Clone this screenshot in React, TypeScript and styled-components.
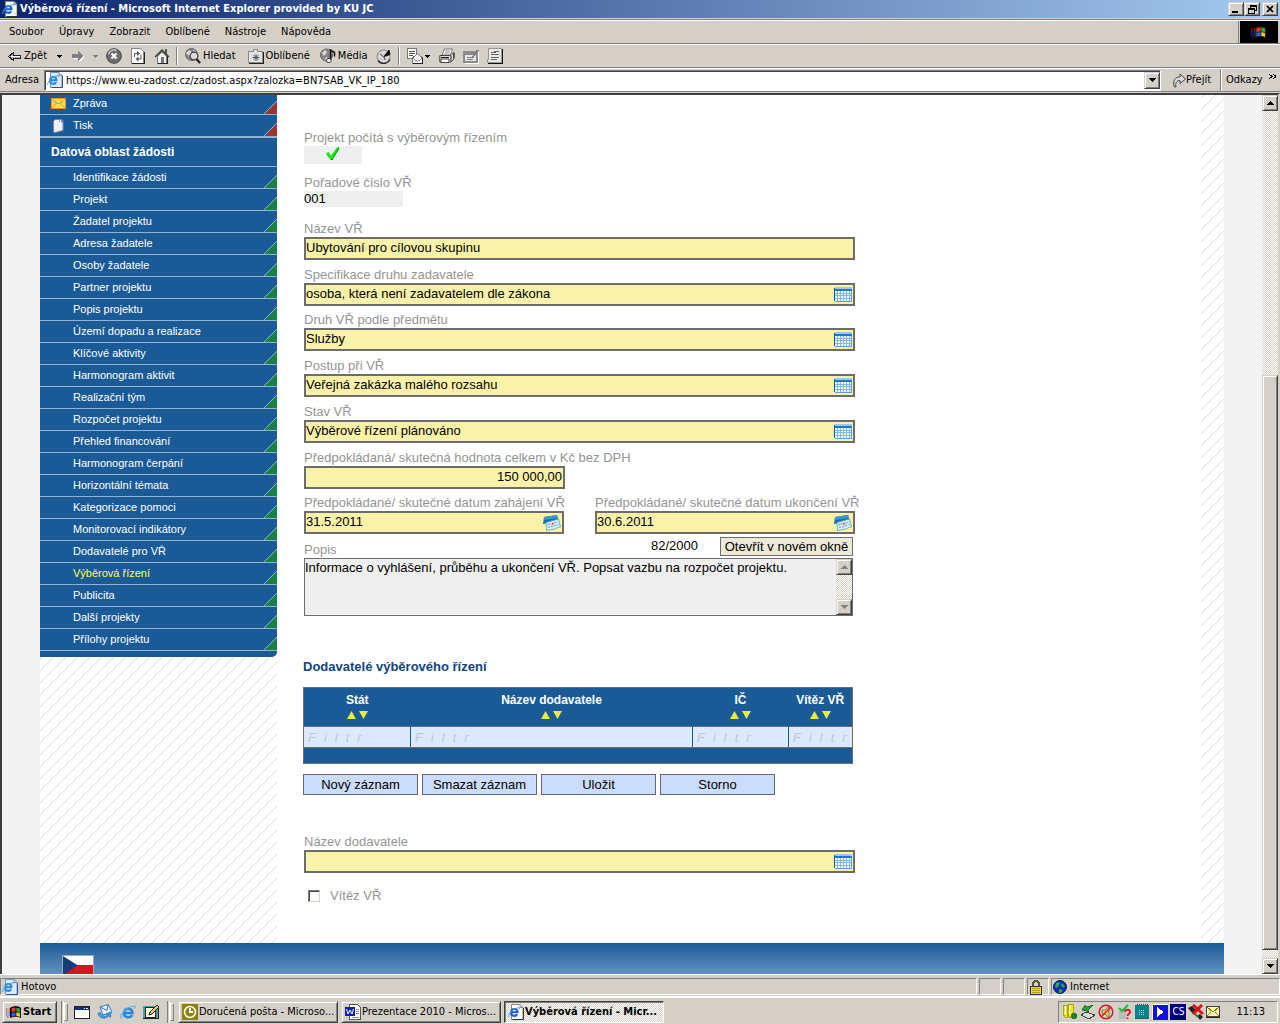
import React from "react";
import styled, { createGlobalStyle, css } from "styled-components";

const face = "#d4d0c8";
const shade = "#808080";
const deep = "#404040";
const navy = "#1a5b97";
const chromeFont = `Tahoma, "DejaVu Sans Condensed", "DejaVu Sans", sans-serif`;
const pageFont = `"Liberation Sans", Arial, sans-serif`;

const raised = css`
  border: 1px solid;
  border-color: ${face} ${deep} ${deep} ${face};
  box-shadow: inset 1px 1px 0 #fff, inset -1px -1px 0 ${shade};
`;
const dither = css`
  background: repeating-conic-gradient(#fff 0 25%, ${face} 0 50%) 0 0 / 2px 2px;
`;

const GlobalStyle = createGlobalStyle`
  * { box-sizing: border-box; }
  body { margin: 0; background: ${face}; }
  button, input, textarea { font: inherit; color: inherit; margin: 0; padding: 0; border-radius: 0; }
  svg { display: block; flex: none; }
`;

/* ---------- window chrome ---------- */

const Desktop = styled.div`
  height: 100vh;
  display: flex;
  flex-direction: column;
  overflow: hidden;
  background: ${face};
  color: #000;
  font: 11px/14px ${chromeFont};
  white-space: nowrap;
`;

const TitleBar = styled.header`
  height: 18px;
  flex: none;
  display: flex;
  align-items: center;
  gap: 2px;
  padding: 0 2px;
  color: #fff;
  font-weight: bold;
  background: linear-gradient(to right, #0a246a, #a6caf0);
`;

const Title = styled.h1`
  flex: 1;
  margin: 0;
  font-size: 11px;
`;

const Caption = styled.button`
  width: 16px;
  height: 14px;
  display: flex;
  align-items: center;
  justify-content: center;
  color: #000;
  background: ${face};
  ${raised}
`;
const CaptionPair = styled.div`
  display: flex;
`;

const Bar = styled.div<{ $height: number }>`
  height: ${(p) => p.$height}px;
  flex: none;
  display: flex;
  align-items: center;
  border-top: 1px solid #fff;
  border-bottom: 1px solid ${shade};
`;

const MenuBar = styled(Bar)`
  margin-top: 2px;
  align-items: stretch;
  box-shadow: 0 -1px 0 ${shade};
`;
const Menu = styled.nav`
  flex: 1;
  display: flex;
  align-items: center;
  padding-left: 2px;
  border-right: 1px solid ${shade};
`;
const MenuItem = styled.button`
  padding: 0 8px 0 7px;
  border: 0;
  background: none;
`;
const Throbber = styled.div`
  width: 40px;
  margin-left: 1px;
  display: flex;
  align-items: center;
  justify-content: center;
  background: #000;
  border-right: 2px solid ${face};
`;

const Tools = styled(Bar)`
  padding-left: 8px;
`;
const Tool = styled.button<{ $after?: number }>`
  display: flex;
  align-items: center;
  gap: 2px;
  height: 20px;
  border: 0;
  background: none;
  margin-right: ${(p) => p.$after ?? 8}px;
`;
const Divider = styled.span`
  width: 2px;
  height: 18px;
  margin-right: 7px;
  border-left: 1px solid ${shade};
  border-right: 1px solid #fff;
`;

const AddressBar = styled(Bar)`
  padding-left: 5px;
  margin-bottom: 1px;
`;
const AddressLabel = styled.label`
  width: 39px;
`;
const Combo = styled.div`
  flex: 1;
  height: 21px;
  display: flex;
  align-items: center;
  gap: 3px;
  padding-left: 2px;
  background: #fff;
  border: 1px solid;
  border-color: ${shade} #fff #fff ${shade};
  box-shadow: inset 1px 1px 0 ${deep};
`;
const Url = styled.input`
  flex: 1;
  height: 16px;
  padding-top: 1px;
  border: 0;
  outline: 0;
  background: none;
`;
const ComboButton = styled.button`
  width: 16px;
  height: 17px;
  display: flex;
  align-items: center;
  justify-content: center;
  background: ${face};
  ${raised}
`;
const Go = styled.button`
  display: flex;
  align-items: center;
  width: 60px;
  padding-left: 11px;
  height: 22px;
  border: 0;
  background: none;
  border-right: 1px solid ${shade};
`;
const Links = styled.button`
  width: 59px;
  height: 22px;
  display: flex;
  align-items: center;
  justify-content: space-between;
  border: 0;
  border-left: 1px solid #fff;
  padding: 0 4px;
  background: none;
  svg { margin-bottom: 6px; }
`;

/* ---------- scroll bars ---------- */

const ScrollRail = styled.div`
  width: 16px;
  flex: none;
  display: flex;
  flex-direction: column;
  ${dither}
`;
const ScrollButton = styled.button`
  width: 16px;
  height: 16px;
  flex: none;
  display: flex;
  align-items: center;
  justify-content: center;
  background: ${face};
  ${raised}
`;
const Track = styled.span<{ $share: number }>`
  flex: ${(p) => p.$share} 1 0;
`;
const Thumb = styled(Track)`
  background: ${face};
  ${raised}
`;

/* ---------- web page ---------- */

const Viewport = styled.div`
  flex: 1;
  min-height: 0;
  display: flex;
  border: solid;
  border-width: 2px 2px 0 2px;
  border-color: ${deep} ${face} #fff ${deep};
  background: #f3f3f3;
`;
const Page = styled.div`
  flex: 1;
  min-width: 0;
  overflow: hidden;
  display: flex;
  flex-direction: column;
  padding: 0 38px;
  font-family: ${pageFont};
`;
const Columns = styled.div`
  flex: 1;
  min-height: 0;
  display: flex;
  background:
    linear-gradient(to bottom right, transparent 46%, #d8d8d8 48%, #d8d8d8 52%, transparent 54%) 0 0 / 12px 12px,
    #fff;
`;
const Sidebar = styled.aside`
  width: 237px;
  flex: none;
`;
const Nav = styled.nav`
  margin-top: -2px;
  padding-bottom: 6px;
  background: ${navy};
  border-bottom-right-radius: 5px;
  overflow: hidden;
`;
const NavItem = styled.a<{ $corner: string; $active?: boolean }>`
  display: flex;
  height: 22px;
  padding-left: 11px;
  line-height: 20px;
  border-bottom: 1px solid #8fb2d6;
  color: ${(p) => (p.$active ? "#ffff4d" : "#fff")};
  text-decoration: none;
  background: linear-gradient(to bottom right, transparent 48%, #8fb2d6 48%, #8fb2d6 52%, ${(p) => p.$corner} 53%)
    right bottom / 13px 13px no-repeat;
`;
const NavIcon = styled.span`
  width: 22px;
  display: flex;
  align-items: center;
`;
const NavHeading = styled.h2`
  margin: 0;
  height: 30px;
  padding-left: 11px;
  font-size: 12px;
  line-height: 29px;
  color: #fff;
  border-top: 1px solid #8fb2d6;
  border-bottom: 1px solid #8fb2d6;
`;

const Main = styled.main`
  flex: 1;
  min-width: 0;
  margin-right: 23px;
  padding: 34px 0 0 26px;
  background: #fff;
  font-size: 13px;
  line-height: 17px;
`;
const Form = styled.form`
  width: 552px;
  padding-left: 1px;
`;
const Field = styled.div<{ $gap: number }>`
  padding-bottom: ${(p) => p.$gap}px;
`;
const Label = styled.label`
  display: block;
  color: #949494;
`;
const ReadOnly = styled.output<{ $width: number; $height: number }>`
  display: block;
  width: ${(p) => p.$width}px;
  height: ${(p) => p.$height}px;
  line-height: 16px;
  background: #efefef;
  svg { margin-left: 22px; }
`;
const Box = styled.div<{ $width?: number }>`
  width: ${(p) => (p.$width ? p.$width + "px" : "100%")};
  height: 23px;
  display: flex;
  background: #fbf2a9;
  border: 2px solid #6d6d6d;
`;
const BoxInput = styled.input<{ $right?: boolean }>`
  flex: 1;
  min-width: 0;
  height: 17px;
  border: 0;
  outline: 0;
  padding-right: 1px;
  background: none;
  text-align: ${(p) => (p.$right ? "right" : "left")};
`;
const BoxButton = styled.button`
  width: 19px;
  display: flex;
  align-items: center;
  border: 0;
  background: none;
`;
const Dates = styled.div`
  display: flex;
  gap: 31px;
  padding-bottom: 3px;
`;
const DateField = styled.div`
  width: 260px;
`;
const NoteHead = styled.div`
  width: 549px;
  display: flex;
  align-items: flex-start;
`;
const NoteLabel = styled(Label)`
  flex: 1;
  padding-top: 4px;
`;
const Counter = styled.span`
  margin-right: 22px;
`;
const OpenButton = styled.button`
  width: 133px;
  height: 19px;
  line-height: 17px;
  background: #ece9d8;
  border: 1px solid #6d6d6d;
`;
const Note = styled.div`
  width: 549px;
  height: 58px;
  display: flex;
  margin-bottom: 42px;
  border: 1px solid #6d6d6d;
  background: #efefef;
`;
const NoteText = styled.textarea`
  flex: 1;
  resize: none;
  overflow: hidden;
  border: 0;
  outline: 0;
  background: none;
`;
const Section = styled.h3`
  margin: 0 0 12px;
  font-size: 13px;
  line-height: 17px;
  color: #15447e;
`;
const Grid = styled.table`
  width: 549px;
  height: 77px;
  table-layout: fixed;
  border-collapse: collapse;
  border: 1px solid #6d6d6d;
  background: ${navy};
  color: #fff;
  margin-bottom: 10px;
  font-size: 12px;
  th, td { padding: 0; }
`;
const Head = styled.th`
  height: 39px;
  padding-bottom: 2px !important;
  line-height: 14px;
  border-bottom: 1px solid #6d6d6d;
`;
const Sorters = styled.div`
  display: flex;
  justify-content: center;
  gap: 3px;
  padding-top: 4px;
`;
const Sorter = styled.button`
  border: 0;
  background: none;
`;
const FilterCell = styled.td`
  height: 21px;
  background: #dce8fe;
  border-right: 1px solid ${navy};
  border-bottom: 1px solid #6d6d6d;
  &:last-child { border-right-color: #6d6d6d; }
`;
const Filter = styled.input`
  display: block;
  width: 100%;
  height: 18px;
  padding-left: 4px;
  border: 0;
  outline: 0;
  background: none;
  font-size: 13px;
  font-style: italic;
  letter-spacing: 8px;
  &::placeholder { color: #bcc7d8; opacity: 1; }
`;
const Actions = styled.div`
  display: flex;
  gap: 4px;
  margin-bottom: 38px;
`;
const Action = styled.button`
  width: 115px;
  height: 21px;
  line-height: 19px;
  background: #ccdcff;
  border: 1px solid #66667a;
`;
const CheckRow = styled.div`
  display: flex;
  align-items: center;
  gap: 10px;
  padding: 14px 0 0 4px;
`;
const Check = styled.input`
  appearance: none;
  width: 12px;
  height: 12px;
  background: #fff;
  border: 1px solid;
  border-color: ${shade} ${face} ${face} ${shade};
  box-shadow: inset 1px 1px 0 ${deep};
`;
const Footer = styled.footer`
  height: 31px;
  flex: none;
  padding: 12px 22px 0;
  background: linear-gradient(${navy}, #6592c0);
`;

/* ---------- status bar and task bar ---------- */

const StatusBar = styled.div`
  height: 23px;
  flex: none;
  display: flex;
  gap: 2px;
  padding: 3px 0 1px;
  border-top: 1px solid #fff;
  border-bottom: 1px solid #fff;
`;
const Pane = styled.div<{ $width?: number }>`
  flex: ${(p) => (p.$width ? `0 0 ${p.$width}px` : "1")};
  display: flex;
  align-items: center;
  gap: 3px;
  padding-left: 1px;
  border: 1px solid;
  border-color: ${shade} #fff #fff ${shade};
`;
const TaskBar = styled.footer`
  height: 27px;
  flex: none;
  display: flex;
  align-items: center;
  padding: 1px 2px 0;
  border-top: 1px solid #fff;
`;
const Start = styled.button`
  width: 55px;
  height: 22px;
  display: flex;
  align-items: center;
  gap: 1px;
  padding-left: 3px;
  margin-right: 4px;
  font-weight: bold;
  background: ${face};
  ${raised}
`;
const Grip = styled.span`
  width: 7px;
  height: 22px;
  display: flex;
  justify-content: space-between;
  &::before { content: ""; width: 2px; border-left: 1px solid ${shade}; border-right: 1px solid #fff; }
  &::after { content: ""; width: 3px; margin: 2px 0; border: 1px solid; border-color: #fff ${shade} ${shade} #fff; }
`;
const Quick = styled.div`
  display: flex;
  gap: 7px;
  padding: 0 8px 0 6px;
`;
const QuickButton = styled.button`
  border: 0;
  background: none;
`;
const Tasks = styled.div`
  flex: 1;
  min-width: 0;
  display: flex;
  gap: 3px;
  padding-left: 4px;
`;
const Task = styled.button<{ $active?: boolean }>`
  width: 160px;
  height: 22px;
  display: flex;
  align-items: center;
  gap: 1px;
  padding: 0 3px;
  text-align: left;
  background: ${face};
  ${raised}
  ${(p) =>
    p.$active &&
    css`
      ${dither}
      font-weight: bold;
      border-color: ${deep} #fff #fff ${deep};
      box-shadow: inset 1px 1px 0 ${shade};
    `}
`;
const Tray = styled.div`
  height: 22px;
  display: flex;
  align-items: center;
  gap: 2px;
  padding: 0 12px 0 3px;
  border: 1px solid;
  border-color: ${shade} #fff #fff ${shade};
`;
const Language = styled.span`
  width: 16px;
  height: 16px;
  font-size: 10px;
  line-height: 16px;
  text-align: center;
  color: #fff;
  background: #000080;
`;
const Clock = styled.time`
  margin-left: 14px;
`;

/* ---------- icons ---------- */

type IconProps = { children: React.ReactNode; w?: number; h?: number; smooth?: boolean };
const Icon = ({ children, w = 16, h = 16, smooth }: IconProps) => (
  <svg width={w} height={h} viewBox={`0 0 ${w} ${h}`} fill="none" shapeRendering={smooth ? "auto" : "crispEdges"} aria-hidden="true">
    {children}
  </svg>
);
const Down = ({ color = "#000" }) => (
  <Icon w={7} h={4}><path d="M0 0h7v1h-1v1h-1v1h-1v1h-1v-1h-1v-1h-1v-1h-1z" fill={color} /></Icon>
);
const Up = ({ color = "#000" }) => (
  <Icon w={7} h={4}><path d="M3 0h1v1h1v1h1v1h1v1h-7v-1h1v-1h1v-1h1z" fill={color} /></Icon>
);
const Caret = ({ color = "#000" }) => (
  <Icon w={5} h={3}><path d="M0 0h5v1h-1v1h-1v1h-1v-1h-1v-1h-1z" fill={color} /></Icon>
);
const PageE = ({ plain }: { plain?: boolean }) => (
  <Icon smooth>
    <path d="M3.500.5h8.500l3 3v12H3.500z" fill={plain ? "#dfeafc" : "#fff"} stroke={plain ? "#6c94d0" : "#888"} />
    <path d="M15.500 4v11.500h-11" stroke={plain ? "#33508c" : "#333"} />
    <path d="M12 .5v3h3" stroke="#888" />
    <path d="M3 8.300h6.500c0-4.400-6-4.400-6.400 0-.3 4.100 4.600 4.500 6 1.900" stroke={plain ? "#2488dc" : "#1c5cd8"} strokeWidth="2.100" />
    <path d="M.9 13c-1.400-2.500 4.600-9 10.100-9.300.8 0 .6 1 .2 1.600" stroke="#4ba4ee" />
  </Icon>
);
const BigE = () => (
  <Icon smooth>
    <path d="M4 9h8.500c0-5.600-8.500-5.600-8.600 0 0 5 6.500 5.500 8.200 2" stroke="#2688d8" strokeWidth="2.600" />
    <path d="M1.500 14.500c-3-3 5-12 13-12.500 1 0 .8 1.500 0 2.500" stroke="#5ab2f0" strokeWidth="1.200" />
  </Icon>
);
const Back = () => (
  <Icon w={14} h={14}>
    <path d="M5.500 3.500l-5 4 5 4v-2.500h7V6h-7z" fill="#b0b0b0" stroke="#222" />
    <path d="M3 7h9" stroke="#fff" />
  </Icon>
);
const Forward = () => (
  <Icon w={14} h={14}>
    <path d="M8 3l6 5-6 5v-3H2V7h6z" fill="#fff" />
    <path d="M7 2l6 5-6 5V9H1V5h6z" fill="#808080" />
  </Icon>
);
const Stop = () => (
  <Icon smooth>
    <circle cx="8" cy="8" r="7.300" fill="#6e6e6e" stroke="#3c3c3c" />
    <path d="M2.500 6.500a5.500 5.500 0 0 1 8-4" stroke="#c8c8c8" strokeWidth="1.500" />
    <path d="M5.500 5.500l5 5m0-5l-5 5" stroke="#fff" strokeWidth="2" />
  </Icon>
);
const Refresh = () => (
  <Icon w={14}>
    <path d="M.5.5h9l3 3v11.500H.5z" fill="#fff" stroke="#888" />
    <path d="M13.500 4v11.500H1" stroke="#222" />
    <path d="M3.500 9V5.500h3M10 6.500V11H7" stroke="#555" shapeRendering="auto" />
    <path d="M6 3l3 2.500L6 8zM7.500 8.500v5l-3-2.500z" fill="#555" shapeRendering="auto" />
  </Icon>
);
const Home = () => (
  <Icon>
    <path d="M11 1h2v5h-2z" fill="#555" />
    <path d="M3.500 8v7.500h9V8L8 3.500z" fill="#f2f2f2" stroke="#777" />
    <path d="M13.500 8v7.500H4" stroke="#222" />
    <path d="M1 9l7-7 7 7" stroke="#444" strokeWidth="1.500" shapeRendering="auto" />
    <path d="M7 9h3v6H7z" fill="#777" />
  </Icon>
);
const Search = () => (
  <Icon smooth>
    <circle cx="6.500" cy="6.500" r="6" fill="#888" stroke="#666" />
    <path d="M1.500 5l3-2.500 2 2-2 3zM8 2l3 2" fill="#ddd" stroke="#ddd" />
    <circle cx="9" cy="8" r="3.800" fill="#dcdcdc" stroke="#444" strokeWidth="1.300" />
    <path d="M11.500 11l3.500 4" stroke="#222" strokeWidth="2.400" />
  </Icon>
);
const Star = () => (
  <Icon>
    <path d="M.5 3.500h5v-2h4v2h5v11H.5z" fill="#e2e2e2" stroke="#8a8a8a" />
    <path d="M15.500 4v11.500H1" stroke="#222" />
    <path d="M8 6v7M4.500 9.500h7M5.500 7l5 5m0-5l-5 5" stroke="#555" shapeRendering="auto" />
  </Icon>
);
const Media = () => (
  <Icon smooth>
    <circle cx="6.500" cy="7" r="6" fill="#858585" stroke="#666" />
    <path d="M2 5l3-3 2 2-3 4zM4 11l3-2 1 3" fill="#ddd" />
    <path d="M10.500 12V2l4 2.500v4" stroke="#111" strokeWidth="1.500" />
    <ellipse cx="8.800" cy="12.500" rx="2.400" ry="2" fill="#fff" stroke="#333" />
  </Icon>
);
const History = () => (
  <Icon smooth>
    <circle cx="7.500" cy="8.500" r="6.500" fill="#d0d0d0" stroke="#888" />
    <path d="M2 12.500a7 7 0 0 0 12-1" stroke="#333" strokeWidth="1.600" />
    <path d="M8 8.500L13 2l1 4.500z" fill="#000" stroke="#111" />
    <path d="M8 9L4 6M8 9l1 3" stroke="#555" />
    <path d="M8 3v1.500M3 9h1.500M8 14v-1.500M12 9.500h1" stroke="#fff" />
  </Icon>
);
const MailPage = () => (
  <Icon>
    <path d="M.5.500h9v10h-9z" fill="#fff" stroke="#777" />
    <path d="M2 3h6M2 5h6M2 7h4" stroke="#555" />
    <path d="M5.500 10l5-4.500 5 4.500v5.500h-10z" fill="#f4f4f4" stroke="#777" />
    <path d="M6 10.500l4.500 3 4.500-3" stroke="#888" />
    <path d="M15.500 10v5.500h-10" stroke="#222" />
  </Icon>
);
const Printer = () => (
  <Icon smooth>
    <path d="M5.500 1h8l-2 6H3z" fill="#fff" stroke="#777" />
    <path d="M6 3h5M5.500 5h5" stroke="#888" />
    <path d="M.8 7.500h11l3-3v6.500l-3 3H.8z" fill="#ddd" stroke="#444" />
    <path d="M12 8v5.500M15 5v5M2 9.500h8" stroke="#222" />
    <path d="M2 11h8v3.500H2z" fill="#fff" stroke="#444" />
  </Icon>
);
const Edit = () => (
  <Icon>
    <path d="M1 4h15v12H2z" fill="#fff" />
    <path d="M0 3h15v12H0z" fill="#8a8a8a" />
    <path d="M2 7h11v6H2z" fill="#e6e6e6" />
    <path d="M4 9.500h4M4 11.500h6" stroke="#808080" />
    <path d="M9 10l6-8" stroke="#808080" strokeWidth="2" />
  </Icon>
);
const Discuss = () => (
  <Icon>
    <path d="M1.500.5h13v14H.5v-3h1z" fill="#e8e8e8" stroke="#999" />
    <path d="M15.500 1v14.500H1" stroke="#111" />
    <path d="M4 4.500h5M7 3.500h5M4 6.500h8M4 9.500h8M4 11.500h6" stroke="#666" />
  </Icon>
);
const GoArrow = () => (
  <Icon smooth w={14}>
    <path d="M2.500 15C0 9.500 3 4.500 8 5V2l5.500 5L8 11.500V8.500C4.500 8.500 3 11 4 15z" fill="#ddd" stroke="#444" />
  </Icon>
);
const WinLogo = ({ dark }: { dark?: boolean }) => (
  <Icon smooth>
    <path d="M4 4c2-2 9-2.500 11 0v10c-3-2-8-1.500-11 0z" fill={dark ? "#222" : "#000"} />
    <path d="M5.500 4.500q2-1.200 4-.8v3.800q-2-.4-4 .7z" fill="#e83820" />
    <path d="M10.300 3.800q2 0 3.700 1v3.700q-1.700-1-3.700-1z" fill="#30a840" />
    <path d="M5.500 9q2-1 4-.8v3.800q-2-.3-4 .7z" fill="#3060e0" />
    <path d="M10.300 8.300q2 0 3.700 1v3.700q-1.700-1-3.700-1z" fill="#f0c818" />
    <path d="M0 5h1.500M2.500 5H4M0 7h1.500M2.500 7H4" stroke="#d03020" />
    <path d="M0 9h1.500M2.500 9H4M0 11h1.500M2.500 11H4M1 13h1.500" stroke="#3050c0" />
  </Icon>
);
const TableIcon = () => (
  <Icon w={18} h={15}>
    <path d="M0 1h18v14H0z" fill="#f2f9fe" />
    <path d="M1 0h17v2H1z" fill="#9cc8ee" />
    <path d="M0 1h1v13H0z" fill="#0c5cac" />
    <path d="M1 2h17v2H1z" fill="#1c78d0" />
    <path d="M3.500 4v11M6.500 4v11M9.500 4v11M12.500 4v11M15.500 4v11M1 6.500h17M1 8.500h17M1 11.500h17" stroke="#86b8dc" />
    <path d="M1 14.500h17M17.500 4v11" stroke="#5aa0d4" />
  </Icon>
);
const CalendarIcon = () => (
  <Icon w={18} h={16} smooth>
    <path d="M1 2l13-2 1.500 6L0 9z" fill="#1670ac" />
    <path d="M1 2l13-2 .8 3L1 5z" fill="#3a98cc" />
    <path d="M3 7.500L15.500 4 17.500 12c-3 0-4 1.500-6 2l-8 1.500z" fill="#e4f2fa" stroke="#4a9cc8" strokeWidth=".8" />
    <path d="M4 10l11-3M5 12.500l11-3M6 8v6M9 7.500v6M12 6.500v6" stroke="#6ab0d8" strokeDasharray="2 1" />
    <path d="M8 7h3v3H8z" fill="#f4c8cc" />
    <path d="M9 8h1.500v1.500H9z" fill="#c83848" />
  </Icon>
);
const CheckMark = () => (
  <Icon w={14} h={15} smooth>
    <path d="M1 9l2-1 2.500 3L12 2l1.500-.5-.5 1.500L6.500 14H5z" fill="#0a7a0a" />
    <path d="M0 7.500L2.500 6 5 9.500l6-8L13 1 6.500 13H4.500z" fill="#00f000" />
  </Icon>
);
const Envelope = () => (
  <Icon w={15} h={11}>
    <path d="M.5.500h14v10H.5z" fill="#ffd95a" stroke="#f0961e" />
    <path d="M1 1l5 4.500h3L14 1M1 10l4-4M14 10l-4-4" stroke="#e8a030" />
  </Icon>
);
const Sheet = () => (
  <Icon w={15} h={14} smooth>
    <path d="M2.500 2l2-1.500h6L12 2.500v9l-8 2-1.500-.5z" fill="#eef0ff" stroke="#8080c0" />
    <path d="M8 2h1M10 2h1v1.500" stroke="#404080" />
  </Icon>
);
const Flag = () => (
  <Icon w={32} h={22} smooth>
    <path d="M0 0h32v22H0z" fill="#a8a8a8" />
    <path d="M1 1h30v9H1z" fill="#fff" />
    <path d="M1 10h30v12H1z" fill="#d8141c" />
    <path d="M1 1l15 9.500L1 20z" fill="#123f7c" />
  </Icon>
);
const Lock = () => (
  <Icon w={14}>
    <path d="M4 8V4l2-2h2l2 2v4" stroke="#554" strokeWidth="2" />
    <path d="M1.500 7.500h11v8h-11z" fill="#e8e020" stroke="#332" />
    <path d="M3 9.500h8M3 11.500h8M3 13.500h8" stroke="#a8a010" />
  </Icon>
);
const Globe = () => (
  <Icon w={14} h={14} smooth>
    <circle cx="7" cy="7" r="6.500" fill="#1028c0" stroke="#102050" />
    <path d="M3 3l4-1-1 3-2 3-2-1zM9 3l3 3-2 2-2-3zM6 9l4 1-2 3H6z" fill="#20b830" />
  </Icon>
);
const Desk = () => (
  <Icon>
    <path d="M.5 2.500h15v12H.5z" fill="#fff" stroke="#222" />
    <path d="M1 3h14v3H1z" fill="#1428a0" />
    <path d="M10 4h1v1h-1zM12 4h2v1h-2z" fill="#fff" />
  </Icon>
);
const Outlook = () => (
  <Icon smooth>
    <path d="M3 3l8-2.500 4 7.500-9 3z" fill="#e8f2fc" stroke="#3878c0" />
    <path d="M3 3l7 3.500 1-6" stroke="#3878c0" />
    <path d="M1 9c0 5.500 8 7 10.500 3l2 1.500L14 8l-5 2 1.500 1C8.500 13 4 12 3.500 8.500z" fill="#38a0e8" stroke="#1860b0" strokeWidth=".5" />
  </Icon>
);
const Pencil = () => (
  <Icon>
    <path d="M0 2h16v13H0z" fill="#4aa0b0" />
    <path d="M0 14.500h16M15.500 3v12" stroke="#222" />
    <path d="M2.500 3.500h8l2 2v8h-10z" fill="#fffbe0" stroke="#222" />
    <path d="M6 11l1-3 7-7 2 2-7 7z" fill="#f0c850" stroke="#222" shapeRendering="auto" />
  </Icon>
);
const OutlookClock = () => (
  <Icon>
    <path d="M0 0h16v16H0z" fill="#8a8400" />
    <circle cx="8" cy="8" r="5.500" stroke="#fff" strokeWidth="1.500" shapeRendering="auto" />
    <path d="M8 4v4h3" stroke="#fff" strokeWidth="1.500" />
  </Icon>
);
const Word = () => (
  <Icon>
    <path d="M4.500.5h8l3 3v12h-11z" fill="#fff" stroke="#555" />
    <path d="M11 5h3M11 7h3M11 9h3M7 13h7" stroke="#888" />
    <path d="M0 3h10v9H0z" fill="#1020b0" />
    <path d="M1.500 5l1.500 5 2-4 2 4 1.500-5" stroke="#fff" shapeRendering="auto" />
  </Icon>
);
const trayIcons = [
  <Icon key="volume"><path d="M1 1h4v12H3L1 10zM6 0h5v12l-3 2-2-3z" fill="#f0e820" stroke="#b0a800" /><path d="M3 2v8M7.500 2v8" stroke="#fff" /><circle cx="12" cy="12" r="3" fill="#208020" /></Icon>,
  <Icon key="eject"><path d="M1 11l5-3 9 3-6 4z" fill="#d8d8d8" stroke="#444" /><path d="M2 6l3-5 1 2 7-2-5 5 1 2z" fill="#20a030" stroke="#085010" strokeWidth=".6" /></Icon>,
  <Icon key="muted" smooth><path d="M4 6h3l4-4v12l-4-4H4z" fill="#e8d040" stroke="#777" /><circle cx="8" cy="8" r="6.800" stroke="#d81820" strokeWidth="1.500" /><path d="M13 3L3 13" stroke="#d81820" strokeWidth="1.500" /></Icon>,
  <Icon key="query" smooth><path d="M3 7h7v8H3z" fill="#bbb" /><path d="M3 4l3 3 6-6" stroke="#10c040" strokeWidth="2" /><path d="M9 8c0-3 5-3 5 0 0 2-2.500 2-2.500 4M11.500 13.500V15" stroke="#e01820" strokeWidth="1.800" /></Icon>,
  <Icon key="chip"><path d="M1 1h14v14H1z" fill="#108088" /><path d="M1 14.500h14M3 .5h12" stroke="#444" strokeDasharray="1 1" /><path d="M5 6.500h6M5 8.500h6M5 10.500h6" stroke="#a0e0e0" strokeDasharray="1 1" /></Icon>,
  <Icon key="play"><path d="M0 0h16v16H0z" fill="#1010e0" /><path d="M0 .5h16M.5 0v16" stroke="#fff" /><path d="M5 3l7 5-7 5z" fill="#fff" /></Icon>,
];
const Unplugged = () => (
  <Icon smooth>
    <path d="M0 4l4-2 4 4-3 4zM9 12l3-2 3 3-3 3z" fill="#222" />
    <path d="M6 9l4 4" stroke="#208030" strokeWidth="2" />
    <path d="M5 1l10 9M14 1L5 10" stroke="#e01010" strokeWidth="3" />
  </Icon>
);
const TrayMail = () => (
  <Icon w={14} h={12}>
    <path d="M.5.500h13v10H.5z" fill="#fffcb0" stroke="#444" />
    <path d="M1 1l6 5 6-5M1 10l4-4M13 10L9 6" stroke="#887a10" />
    <path d="M0 11.500h14" stroke="#222" />
  </Icon>
);

/* ---------- data ---------- */

const menus = ["Soubor", "Úpravy", "Zobrazit", "Oblíbené", "Nástroje", "Nápověda"];
const sections = [
  "Identifikace žádosti", "Projekt", "Žadatel projektu", "Adresa žadatele", "Osoby žadatele",
  "Partner projektu", "Popis projektu", "Území dopadu a realizace", "Klíčové aktivity",
  "Harmonogram aktivit", "Realizační tým", "Rozpočet projektu", "Přehled financování",
  "Harmonogram čerpání", "Horizontální témata", "Kategorizace pomoci", "Monitorovací indikátory",
  "Dodavatelé pro VŘ", "Výběrová řízení", "Publicita", "Další projekty", "Přílohy projektu",
];
const lookups = [
  { id: "spec", label: "Specifikace druhu zadavatele", value: "osoba, která není zadavatelem dle zákona", gap: 5 },
  { id: "druh", label: "Druh VŘ podle předmětu", value: "Služby", gap: 6 },
  { id: "postup", label: "Postup při VŘ", value: "Veřejná zakázka malého rozsahu", gap: 6 },
  { id: "stav", label: "Stav VŘ", value: "Výběrové řízení plánováno", gap: 6 },
];
const dates = [
  { id: "zahajeni", label: "Předpokládané/ skutečné datum zahájení VŘ", value: "31.5.2011" },
  { id: "ukonceni", label: "Předpokládané/ skutečné datum ukončení VŘ", value: "30.6.2011" },
];
const columns = [
  { name: "Stát", width: 107 },
  { name: "Název dodavatele", width: 282 },
  { name: "IČ", width: 96 },
  { name: "Vítěz VŘ", width: 64 },
];
const actions = ["Nový záznam", "Smazat záznam", "Uložit", "Storno"];

const Col = styled.col<{ $width: number }>`
  width: ${(p) => p.$width}px;
`;

function Lookup({ id, value = "" }: { id: string; value?: string }) {
  return (
    <Box>
      <BoxInput id={id} defaultValue={value} />
      <BoxButton type="button" aria-label="Vybrat ze seznamu"><TableIcon /></BoxButton>
    </Box>
  );
}

function BrowserChrome() {
  return (
    <>
      <TitleBar>
        <PageE />
        <Title>Výběrová řízení - Microsoft Internet Explorer provided by KU JC</Title>
        <CaptionPair>
          <Caption aria-label="Minimalizovat"><Icon w={8} h={8}><path d="M0 6h6v2H0z" fill="#000" /></Icon></Caption>
          <Caption aria-label="Obnovit"><Icon w={9} h={9}><path d="M2.500 3V1.500h6v4H7M2 .500h7M.5 4.500h6v4h-6zM0 3.500h7" stroke="#000" /></Icon></Caption>
        </CaptionPair>
        <Caption aria-label="Zavřít"><Icon w={8} h={8} smooth><path d="M1 1l6 6M7 1L1 7" stroke="#000" strokeWidth="1.700" /></Icon></Caption>
      </TitleBar>
      <MenuBar $height={24}>
        <Menu>{menus.map((m) => <MenuItem key={m}>{m}</MenuItem>)}</Menu>
        <Throbber><WinLogo dark /></Throbber>
      </MenuBar>
      <Tools $height={24}>
        <Tool $after={10}><Back />Zpět</Tool>
        <Tool $after={9} aria-label="Historie zpět"><Caret /></Tool>
        <Tool aria-label="Vpřed"><Forward /></Tool>
        <Tool aria-label="Historie vpřed"><Caret color="#808080" /></Tool>
        <Tool $after={9} aria-label="Zastavit"><Stop /></Tool>
        <Tool $after={9} aria-label="Aktualizovat"><Refresh /></Tool>
        <Tool $after={6} aria-label="Domů"><Home /></Tool>
        <Divider />
        <Tool $after={12}><Search />Hledat</Tool>
        <Tool $after={10}><Star />Oblíbené</Tool>
        <Tool $after={8}><Media />Média</Tool>
        <Tool $after={6} aria-label="Historie"><History /></Tool>
        <Divider />
        <Tool $after={9} aria-label="Pošta"><MailPage /><Caret /></Tool>
        <Tool aria-label="Tisk"><Printer /></Tool>
        <Tool aria-label="Upravit"><Edit /></Tool>
        <Tool aria-label="Diskuse"><Discuss /></Tool>
      </Tools>
      <AddressBar $height={24}>
        <AddressLabel htmlFor="url">Adresa</AddressLabel>
        <Combo>
          <PageE plain />
          <Url id="url" defaultValue="https://www.eu-zadost.cz/zadost.aspx?zalozka=BN7SAB_VK_IP_180" />
          <ComboButton aria-label="Historie adres"><Down /></ComboButton>
        </Combo>
        <Go><GoArrow />Přejít</Go>
        <Links>
          Odkazy
          <Icon w={8} h={6}><path d="M1 0l3 2.500L1 5M5 0l3 2.500L5 5" stroke="#000" /></Icon>
        </Links>
      </AddressBar>
    </>
  );
}

function SideNav() {
  return (
    <Sidebar>
      <Nav>
        <NavItem href="#zprava" $corner="#98352c"><NavIcon><Envelope /></NavIcon>Zpráva</NavItem>
        <NavItem href="#tisk" $corner="#98352c"><NavIcon><Sheet /></NavIcon>Tisk</NavItem>
        <NavHeading>Datová oblast žádosti</NavHeading>
        {sections.map((s) => (
          <NavItem key={s} href="#oblast" $corner="#178044" $active={s === "Výběrová řízení"}>
            <NavIcon />{s}
          </NavItem>
        ))}
      </Nav>
    </Sidebar>
  );
}

function TenderForm() {
  return (
    <Main>
      <Form>
        <Field $gap={10}>
          <Label htmlFor="pocita">Projekt počítá s výběrovým řízením</Label>
          <ReadOnly id="pocita" $width={58} $height={18}><CheckMark /></ReadOnly>
        </Field>
        <Field $gap={13}>
          <Label htmlFor="cislo">Pořadové číslo VŘ</Label>
          <ReadOnly id="cislo" $width={99} $height={16}>001</ReadOnly>
        </Field>
        <Field $gap={6}>
          <Label htmlFor="nazev">Název VŘ</Label>
          <Box><BoxInput id="nazev" defaultValue="Ubytování pro cílovou skupinu" /></Box>
        </Field>
        {lookups.map((f) => (
          <Field key={f.id} $gap={f.gap}>
            <Label htmlFor={f.id}>{f.label}</Label>
            <Lookup id={f.id} value={f.value} />
          </Field>
        ))}
        <Field $gap={5}>
          <Label htmlFor="hodnota">Předpokládaná/ skutečná hodnota celkem v Kč bez DPH</Label>
          <Box $width={261}><BoxInput id="hodnota" $right defaultValue="150 000,00" /></Box>
        </Field>
        <Dates>
          {dates.map((d) => (
            <DateField key={d.id}>
              <Label htmlFor={d.id}>{d.label}</Label>
              <Box>
                <BoxInput id={d.id} defaultValue={d.value} />
                <BoxButton type="button" aria-label="Kalendář"><CalendarIcon /></BoxButton>
              </Box>
            </DateField>
          ))}
        </Dates>
        <NoteHead>
          <NoteLabel htmlFor="popis">Popis</NoteLabel>
          <Counter>82/2000</Counter>
          <OpenButton type="button">Otevřít v novém okně</OpenButton>
        </NoteHead>
        <Note>
          <NoteText id="popis" defaultValue="Informace o vyhlášení, průběhu a ukončení VŘ. Popsat vazbu na rozpočet projektu." />
          <ScrollRail>
            <ScrollButton type="button" aria-label="Nahoru"><Up color={shade} /></ScrollButton>
            <Track $share={1} />
            <ScrollButton type="button" aria-label="Dolů"><Down color={shade} /></ScrollButton>
          </ScrollRail>
        </Note>
      </Form>
      <Section>Dodavatelé výběrového řízení</Section>
      <Grid>
        <colgroup>{columns.map((c) => <Col key={c.name} $width={c.width} />)}</colgroup>
        <thead>
          <tr>
            {columns.map((c) => (
              <Head key={c.name} scope="col">
                {c.name}
                <Sorters>
                  <Sorter aria-label="Vzestupně"><Icon w={9} h={8} smooth><path d="M4.500 0L9 8H0z" fill="#e8ec3c" /></Icon></Sorter>
                  <Sorter aria-label="Sestupně"><Icon w={9} h={8} smooth><path d="M4.500 8L9 0H0z" fill="#e8ec3c" /></Icon></Sorter>
                </Sorters>
              </Head>
            ))}
          </tr>
        </thead>
        <tbody>
          <tr>
            {columns.map((c) => (
              <FilterCell key={c.name}><Filter placeholder="Filtr" aria-label={c.name} /></FilterCell>
            ))}
          </tr>
          <tr><td colSpan={4} /></tr>
        </tbody>
      </Grid>
      <Actions>{actions.map((a) => <Action key={a} type="button">{a}</Action>)}</Actions>
      <Form>
        <Label htmlFor="dodavatel">Název dodavatele</Label>
        <Lookup id="dodavatel" />
        <CheckRow>
          <Check type="checkbox" id="vitez" />
          <Label htmlFor="vitez">Vítěz VŘ</Label>
        </CheckRow>
      </Form>
    </Main>
  );
}

function WindowsBar() {
  return (
    <TaskBar>
      <Start><WinLogo />Start</Start>
      <Grip />
      <Quick>
        <QuickButton aria-label="Plocha"><Desk /></QuickButton>
        <QuickButton aria-label="Outlook Express"><Outlook /></QuickButton>
        <QuickButton aria-label="Internet Explorer"><BigE /></QuickButton>
        <QuickButton aria-label="Poznámky"><Pencil /></QuickButton>
      </Quick>
      <Grip />
      <Tasks>
        <Task><OutlookClock />Doručená pošta - Microso...</Task>
        <Task><Word />Prezentace 2010 - Micros...</Task>
        <Task $active><PageE />Výběrová řízení - Micr...</Task>
      </Tasks>
      <Tray>
        {trayIcons}
        <Language>CS</Language>
        <Unplugged />
        <TrayMail />
        <Clock>11:13</Clock>
      </Tray>
    </TaskBar>
  );
}

export default function App() {
  return (
    <Desktop>
      <GlobalStyle />
      <BrowserChrome />
      <Viewport>
        <Page>
          <Columns>
            <SideNav />
            <TenderForm />
          </Columns>
          <Footer><Flag /></Footer>
        </Page>
        <ScrollRail>
          <ScrollButton aria-label="Nahoru"><Up /></ScrollButton>
          <Track $share={265} />
          <Thumb $share={574} />
          <Track $share={8} />
          <ScrollButton aria-label="Dolů"><Down /></ScrollButton>
        </ScrollRail>
      </Viewport>
      <StatusBar>
        <Pane><PageE plain />Hotovo</Pane>
        <Pane $width={22} />
        <Pane $width={22} />
        <Pane $width={22}><Lock /></Pane>
        <Pane $width={229}><Globe />Internet</Pane>
      </StatusBar>
      <WindowsBar />
    </Desktop>
  );
}
